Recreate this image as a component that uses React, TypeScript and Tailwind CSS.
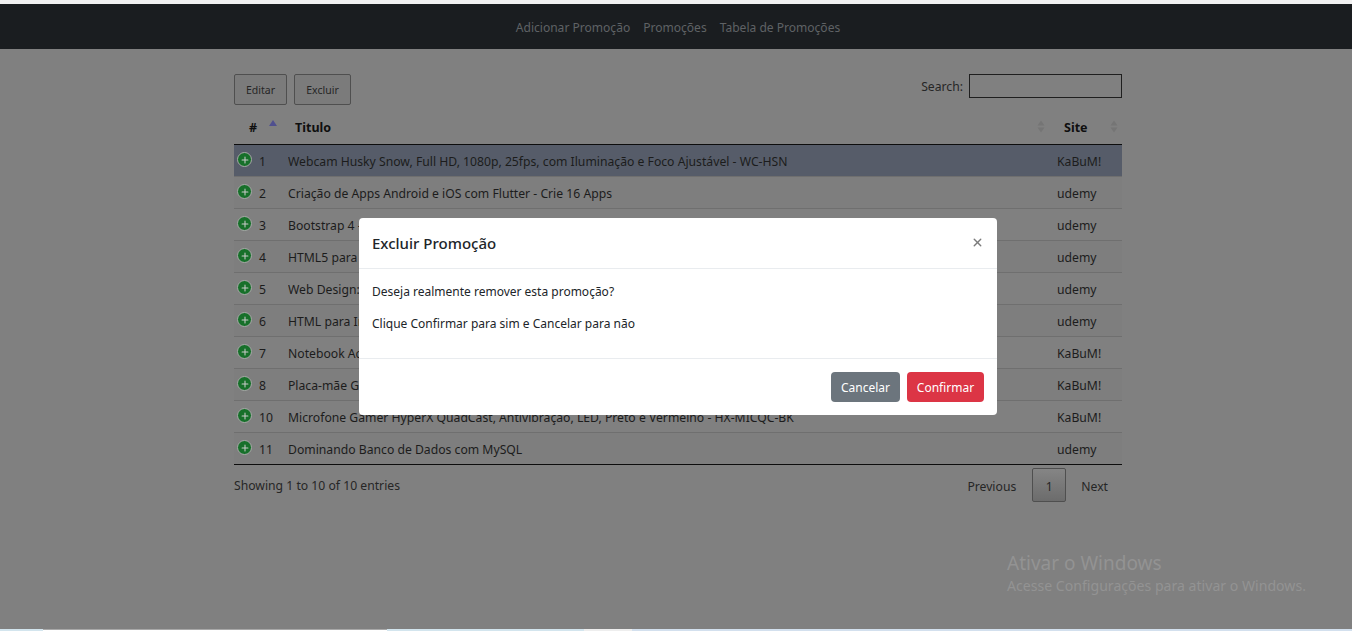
import { Plus, X } from 'lucide-react'

const rows = [
  { id: 1, title: 'Webcam Husky Snow, Full HD, 1080p, 25fps, com Iluminação e Foco Ajustável - WC-HSN', site: 'KaBuM!' },
  { id: 2, title: 'Criação de Apps Android e iOS com Flutter - Crie 16 Apps', site: 'udemy' },
  { id: 3, title: 'Bootstrap 4 - Curso Completo', site: 'udemy' },
  { id: 4, title: 'HTML5 para Iniciantes', site: 'udemy' },
  { id: 5, title: 'Web Design: Curso Completo', site: 'udemy' },
  { id: 6, title: 'HTML para Iniciantes', site: 'udemy' },
  { id: 7, title: 'Notebook Acer Aspire', site: 'KaBuM!' },
  { id: 8, title: 'Placa-mãe Gigabyte', site: 'KaBuM!' },
  { id: 10, title: 'Microfone Gamer HyperX QuadCast, Antivibração, LED, Preto e Vermelho - HX-MICQC-BK', site: 'KaBuM!' },
  { id: 11, title: 'Dominando Banco de Dados com MySQL', site: 'udemy' },
]

function SortArrows() {
  return (
    <svg width="8" height="13" viewBox="0 0 8 13" className="shrink-0">
      <path d="M4 0.5L7.5 5.5H0.5Z" fill="#757575" />
      <path d="M4 12.5L7.5 7.5H0.5Z" fill="#757575" />
    </svg>
  )
}

export default function App() {
  return (
    <div className="h-[638px] overflow-hidden flex flex-col bg-[#808080] text-[12.2px] text-[#1c1c1c] font-['Noto_Sans',sans-serif] relative">
      <div className="h-[4px] bg-[#f1f1f1]" />

      {/* Navbar */}
      <nav className="h-[45px] pt-[3px] pl-[4px] bg-[#1a1d20] flex items-center justify-center gap-[13px] text-[12.05px] text-[#5f6265]">
        <span>Adicionar Promoção</span>
        <span>Promoções</span>
        <span>Tabela de Promoções</span>
      </nav>

      {/* Conteudo */}
      <main className="flex-1 ml-[234px] w-[888px]">
        <div className="flex items-start justify-between mt-[25px]">
          <div className="flex gap-[7px]">
            <button className="h-[31px] w-[53px] pt-[2px] border border-[#4f4f4f] rounded-[2px] bg-[#7b7b7b] text-[10.5px] text-[#262626]">Editar</button>
            <button className="h-[31px] w-[57px] pt-[2px] border border-[#4f4f4f] rounded-[2px] bg-[#7b7b7b] text-[10.5px] text-[#262626]">Excluir</button>
          </div>
          <label className="flex items-center gap-[6px] text-[#262626]">
            <span className="mt-[3px]">Search:</span>
            <input className="w-[153px] h-[24px] border border-[#1f1f1f]" />
          </label>
        </div>

        <div className="flex items-center h-[39px] mt-[1px] pt-[6px] border-b border-[#0d0d0d] font-bold text-[12.5px] text-[#0f0f0f]">
          <div className="w-[54px] flex items-center pl-[15px]">
            <span className="w-[20px]">#</span>
            <svg width="8" height="6" viewBox="0 0 8 6" className="-mt-[10px]">
              <path d="M4 0L8 6H0Z" fill="#50508f" />
            </svg>
          </div>
          <div className="flex-1 flex items-center justify-between pl-[7px] pr-[5px] -mt-[4px]">
            <span className="mt-[4px]">Titulo</span>
            <SortArrows />
          </div>
          <div className="w-[72px] flex items-center justify-between pl-[14px] pr-[4px] -mt-[4px]">
            <span className="mt-[4px]">Site</span>
            <SortArrows />
          </div>
        </div>

        {rows.map((row, index) => (
          <div
            key={row.id}
            className={`flex items-center pt-[4px] ${index < rows.length - 1 ? 'h-[32px] border-b border-[#6f6f6f]' : 'h-[31px]'} ${index === 0 ? 'bg-[#565c69]' : index % 2 === 1 ? 'bg-[#7e7e7e]' : ''}`}
          >
            <div className="w-[54px] flex items-center pl-[3px] gap-[7px]">
              <span className="w-[15px] h-[15px] -mt-[5px] rounded-full bg-[#17702a] border border-[#a9a9a9] flex items-center justify-center shrink-0">
                <Plus size={10} strokeWidth={2.5} className="text-[#c9c9c9]" />
              </span>
              <span>{row.id}</span>
            </div>
            <div className="flex-1 truncate">{row.title}</div>
            <div className="w-[65px]">{row.site}</div>
          </div>
        ))}

        <div className="border-t border-[#0d0d0d] flex items-start justify-between">
          <span className="mt-[12px] text-[#262626]">Showing 1 to 10 of 10 entries</span>
          <div className="flex items-center mt-[3px] text-[#262626]">
            <span className="pr-[16px] mt-[4px]">Previous</span>
            <span className="w-[34px] h-[34px] pt-[4px] flex items-center justify-center border border-[#4f4f4f] rounded-[2px] bg-gradient-to-b from-[#858585] to-[#6c6c6c]">1</span>
            <span className="pl-[15px] pr-[14px] mt-[4px]">Next</span>
          </div>
        </div>
      </main>

      {/* Barra inferior */}
      <footer className="h-[9px] flex bg-white">
        <div className="w-[43px] h-[2px] bg-[#d3e5ee]" />
        <div className="w-[344px] h-[1px] bg-[#a8a8a8]" />
        <div className="w-[197px] h-[2px] bg-[#d3e5ee]" />
        <div className="w-[48px] h-[2px] bg-[#eeeeee]" />
        <div className="flex-1 h-[2px] bg-[#d3e0ee]" />
      </footer>

      {/* Marca d'agua */}
      <div className="absolute left-[1007px] top-[551px] text-[#939393]">
        <div className="text-[19px] leading-[25px]">Ativar o Windows</div>
        <div className="text-[14.1px] leading-[20px]">Acesse Configurações para ativar o Windows.</div>
      </div>

      {/* Modal */}
      <div className="absolute left-[359px] top-[218px] w-[638px] h-[197px] bg-white rounded-[4px] flex flex-col text-[#212529]">
        <div className="h-[51px] flex items-center justify-between border-b border-[#e9ecef] px-[13px]">
          <span className="text-[15px] font-medium">Excluir Promoção</span>
          <X size={13} strokeWidth={2.5} className="text-[#7b7b7b] -mt-[2px]" />
        </div>
        <div className="h-[90px] border-b border-[#e9ecef] pl-[13px] pt-[14px] text-[12px]">
          <p className="h-[32px]">Deseja realmente remover esta promoção?</p>
          <p>Clique Confirmar para sim e Cancelar para não</p>
        </div>
        <div className="flex-1 flex items-center justify-end gap-[7px] pr-[13px] text-[12px]">
          <button className="h-[30px] w-[69px] pt-[2px] rounded-[4px] bg-[#6c757d] text-white">Cancelar</button>
          <button className="h-[30px] w-[77px] pt-[2px] rounded-[4px] bg-[#dc3545] text-white">Confirmar</button>
        </div>
      </div>
    </div>
  )
}
